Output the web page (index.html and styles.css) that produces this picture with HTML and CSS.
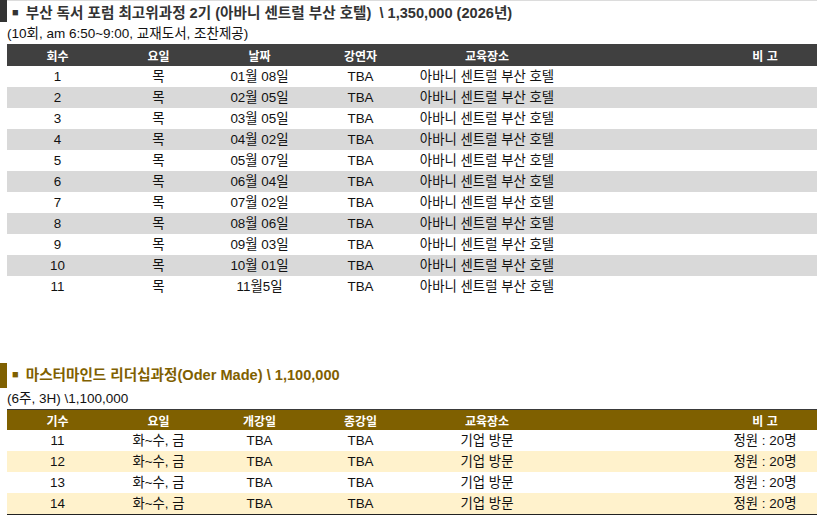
FILE: index.html
```html
<!DOCTYPE html>
<html lang="ko">
<head>
<meta charset="utf-8">
<title>교육 일정</title>
<link rel="stylesheet" href="styles.css">
</head>
<body>
<section class="course course-dark">
  <h2 class="course-title"><span class="sq">■</span> 부산 독서 포럼 최고위과정 2기 (아바니 센트럴 부산 호텔) &nbsp;\ 1,350,000 (2026년)</h2>
  <p class="course-note">(10회, am 6:50~9:00, 교재도서, 조찬제공)</p>
  <table class="sched">
    <colgroup>
      <col class="c1"><col class="c2"><col class="c3"><col class="c4"><col class="c5"><col class="c6">
    </colgroup>
    <thead>
      <tr><th>회수</th><th>요일</th><th>날짜</th><th>강연자</th><th>교육장소</th><th>비 고</th></tr>
    </thead>
    <tbody>
      <tr><td>1</td><td>목</td><td>01월 08일</td><td>TBA</td><td>아바니 센트럴 부산 호텔</td><td></td></tr>
      <tr><td>2</td><td>목</td><td>02월 05일</td><td>TBA</td><td>아바니 센트럴 부산 호텔</td><td></td></tr>
      <tr><td>3</td><td>목</td><td>03월 05일</td><td>TBA</td><td>아바니 센트럴 부산 호텔</td><td></td></tr>
      <tr><td>4</td><td>목</td><td>04월 02일</td><td>TBA</td><td>아바니 센트럴 부산 호텔</td><td></td></tr>
      <tr><td>5</td><td>목</td><td>05월 07일</td><td>TBA</td><td>아바니 센트럴 부산 호텔</td><td></td></tr>
      <tr><td>6</td><td>목</td><td>06월 04일</td><td>TBA</td><td>아바니 센트럴 부산 호텔</td><td></td></tr>
      <tr><td>7</td><td>목</td><td>07월 02일</td><td>TBA</td><td>아바니 센트럴 부산 호텔</td><td></td></tr>
      <tr><td>8</td><td>목</td><td>08월 06일</td><td>TBA</td><td>아바니 센트럴 부산 호텔</td><td></td></tr>
      <tr><td>9</td><td>목</td><td>09월 03일</td><td>TBA</td><td>아바니 센트럴 부산 호텔</td><td></td></tr>
      <tr><td>10</td><td>목</td><td>10월 01일</td><td>TBA</td><td>아바니 센트럴 부산 호텔</td><td></td></tr>
      <tr><td>11</td><td>목</td><td>11월5일</td><td>TBA</td><td>아바니 센트럴 부산 호텔</td><td></td></tr>
    </tbody>
  </table>
</section>

<section class="course course-gold">
  <h2 class="course-title"><span class="sq">■</span> 마스터마인드 리더십과정(Oder Made) \ 1,100,000</h2>
  <p class="course-note">(6주, 3H) \1,100,000</p>
  <table class="sched">
    <colgroup>
      <col class="c1"><col class="c2"><col class="c3"><col class="c4"><col class="c5"><col class="c6">
    </colgroup>
    <thead>
      <tr><th>기수</th><th>요일</th><th>개강일</th><th>종강일</th><th>교육장소</th><th>비 고</th></tr>
    </thead>
    <tbody>
      <tr><td>11</td><td>화~수, 금</td><td>TBA</td><td>TBA</td><td>기업 방문</td><td>정원 : 20명</td></tr>
      <tr><td>12</td><td>화~수, 금</td><td>TBA</td><td>TBA</td><td>기업 방문</td><td>정원 : 20명</td></tr>
      <tr><td>13</td><td>화~수, 금</td><td>TBA</td><td>TBA</td><td>기업 방문</td><td>정원 : 20명</td></tr>
      <tr><td>14</td><td>화~수, 금</td><td>TBA</td><td>TBA</td><td>기업 방문</td><td>정원 : 20명</td></tr>
    </tbody>
  </table>
</section>
</body>
</html>
```

FILE: styles.css
```css
html, body {
  margin: 0;
  padding: 0;
  background: #fff;
}
body {
  font-family: "Liberation Sans", Arial, "Noto Sans CJK KR", sans-serif;
  font-size: 13px;
  color: #111;
  overflow: hidden;
}
.course-title {
  margin: 0;
  font-size: 14.6px;
  font-weight: bold;
  white-space: nowrap;
  border-left: 7px solid #333;
  padding-left: 5px;
}
.course-title .sq {
  font-size: 11px;
  vertical-align: 2px;
  margin-right: 3px;
}
.course-dark .course-title {
  color: #333;
  height: 20px;
  padding-top: 2px;
  line-height: 20px;
  box-shadow: inset 0 1px 0 #dcdcdc;
}
.course-gold {
  margin-top: 66px;
}
.course-gold .course-title {
  color: #7f6000;
  border-left-color: #7f6000;
  height: 25px;
  line-height: 22px;
}
.course-note {
  margin: 2px 0 0 7px;
  height: 20px;
  line-height: 20px;
  font-size: 13.5px;
  white-space: nowrap;
}
.course-gold .course-note {
  margin-top: 1px;
}
.sched {
  margin-left: 7px;
  width: 810px;
  table-layout: fixed;
  border-collapse: collapse;
  border-spacing: 0;
}
.sched .c1, .sched .c2, .sched .c3, .sched .c4 { width: 101px; }
.sched .c5 { width: 152px; }
.sched .c6 { width: 254px; }
.sched th {
  height: 22px;
  padding: 0;
  font-size: 12px;
  font-weight: bold;
  color: #fff;
  text-align: center;
  background: #404040;
}
.sched td {
  height: 21px;
  padding: 0;
  line-height: 20px;
  font-size: 13.4px;
  text-align: center;
  white-space: nowrap;
}
.sched th:last-child,
.sched td:last-child {
  padding-left: 150px;
}
.course-dark tbody tr:nth-child(even) td {
  background: #d9d9d9;
}
.course-gold .sched {
  border-top: 1px solid #3a3a3a;
  border-bottom: 1px solid #222;
}
.course-gold .sched th {
  height: 20px;
  background: #7f6000;
}
.course-gold tbody tr:nth-child(even) td {
  background: #fff2cc;
}
```
